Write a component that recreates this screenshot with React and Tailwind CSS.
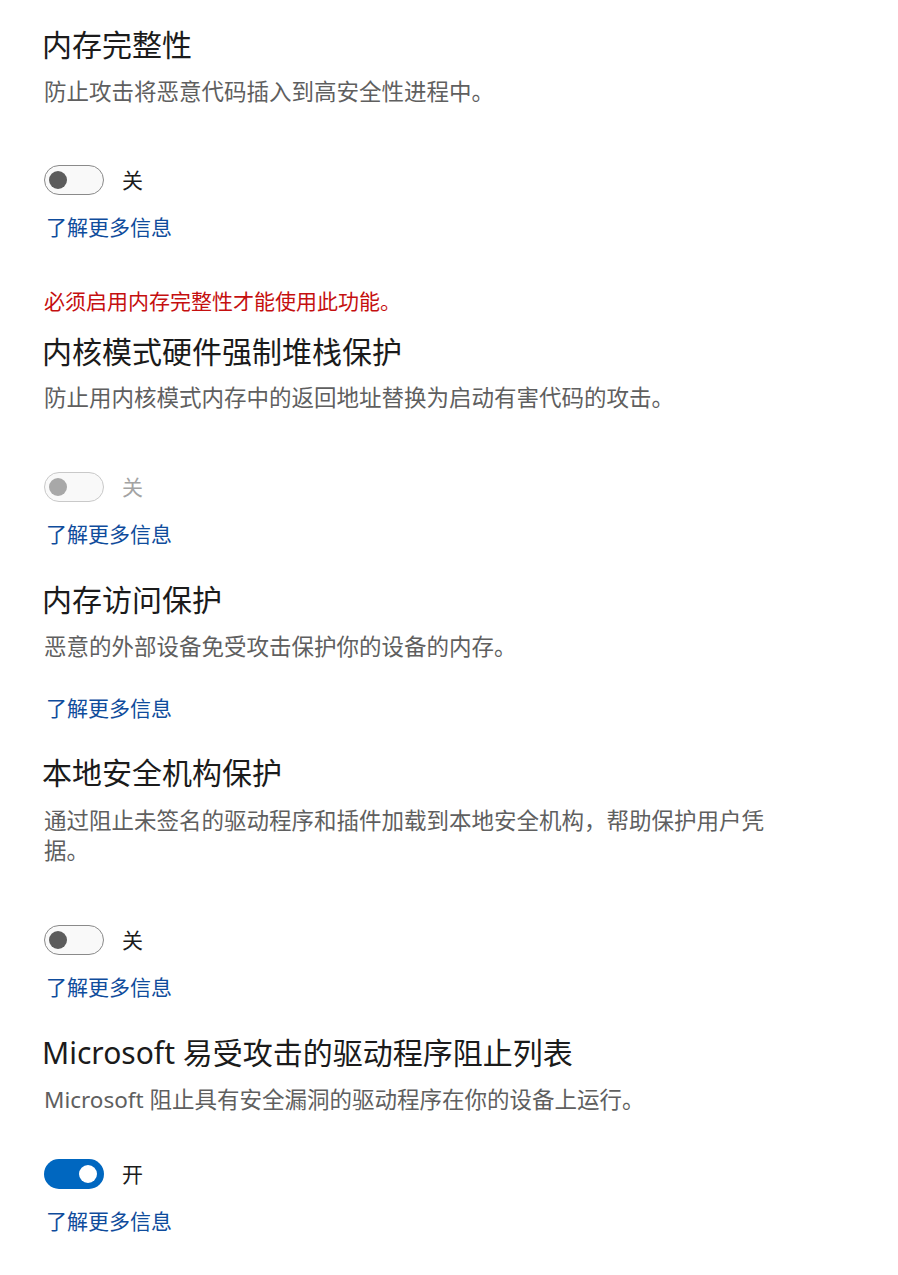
import React from 'react';

const font = { fontFamily: '"Noto Sans", "Noto Sans CJK SC", sans-serif' };

const Toggle = ({ on, disabled }) => {
    if (on) {
        return (
            <div className="flex h-[30px] w-[60px] items-center justify-end rounded-full bg-[#0067c0] pr-[7px]">
                <div className="h-[18px] w-[18px] rounded-full bg-white" />
            </div>
        );
    }
    return (
        <div
            className={`flex h-[30px] w-[60px] items-center rounded-full border-[1.5px] bg-[#f9f9f9] pl-[4px] ${
                disabled ? 'border-[#c9c9c9]' : 'border-[#8a8a8a]'
            }`}
        >
            <div className={`h-[18px] w-[18px] rounded-full ${disabled ? 'bg-[#a8a8a8]' : 'bg-[#5c5c5c]'}`} />
        </div>
    );
};

const Title = ({ children, className = '' }) => (
    <h2 className={`text-[30px] leading-[40px] font-normal text-[#1b1b1b] ${className}`}>{children}</h2>
);

const Desc = ({ children, className = '' }) => (
    <p className={`ml-[2px] max-w-[730px] text-[22.5px] leading-[30px] text-[#5f5f5f] ${className}`}>{children}</p>
);

const Link = ({ className = '' }) => (
    <a className={`ml-[4px] block text-[21px] leading-[28px] text-[#0f4c9c] ${className}`}>了解更多信息</a>
);

const SwitchRow = ({ on, disabled, className = '' }) => (
    <div className={`ml-[2px] flex items-center gap-[18px] ${className}`}>
        <Toggle on={on} disabled={disabled} />
        <span className={`text-[21px] leading-[30px] ${disabled ? 'text-[#a3a3a3]' : 'text-[#1b1b1b]'}`}>
            {on ? '开' : '关'}
        </span>
    </div>
);

export default function App() {
    return (
        <div className="min-h-[1275px] w-[898px] bg-white pl-[42px] pt-[25px]" style={font}>
            {/* 内存完整性 */}
            <Title>内存完整性</Title>
            <Desc className="mt-[12px]">防止攻击将恶意代码插入到高安全性进程中。</Desc>
            <SwitchRow className="mt-[58px]" />
            <Link className="mt-[18px]" />

            {/* 内核模式硬件强制堆栈保护 */}
            <p className="ml-[2px] mt-[46px] text-[21px] leading-[28px] text-[#c50f0f]">
                必须启用内存完整性才能使用此功能。
            </p>
            <Title className="mt-[17px]">内核模式硬件强制堆栈保护</Title>
            <Desc className="mt-[11px]">防止用内核模式内存中的返回地址替换为启动有害代码的攻击。</Desc>
            <SwitchRow disabled className="mt-[59px]" />
            <Link className="mt-[18px]" />

            {/* 内存访问保护 */}
            <Title className="mt-[32px]">内存访问保护</Title>
            <Desc className="mt-[12px]">恶意的外部设备免受攻击保护你的设备的内存。</Desc>
            <Link className="mt-[32px]" />

            {/* 本地安全机构保护 */}
            <Title className="mt-[31px]">本地安全机构保护</Title>
            <Desc className="mt-[13px]">
                通过阻止未签名的驱动程序和插件加载到本地安全机构，帮助保护用户凭据。
            </Desc>
            <SwitchRow className="mt-[59px]" />
            <Link className="mt-[18px]" />

            {/* Microsoft 易受攻击的驱动程序阻止列表 */}
            <Title className="mt-[32px]">Microsoft 易受攻击的驱动程序阻止列表</Title>
            <Desc className="mt-[12px]">Microsoft 阻止具有安全漏洞的驱动程序在你的设备上运行。</Desc>
            <SwitchRow on className="mt-[44px]" />
            <Link className="mt-[18px]" />
        </div>
    );
}
